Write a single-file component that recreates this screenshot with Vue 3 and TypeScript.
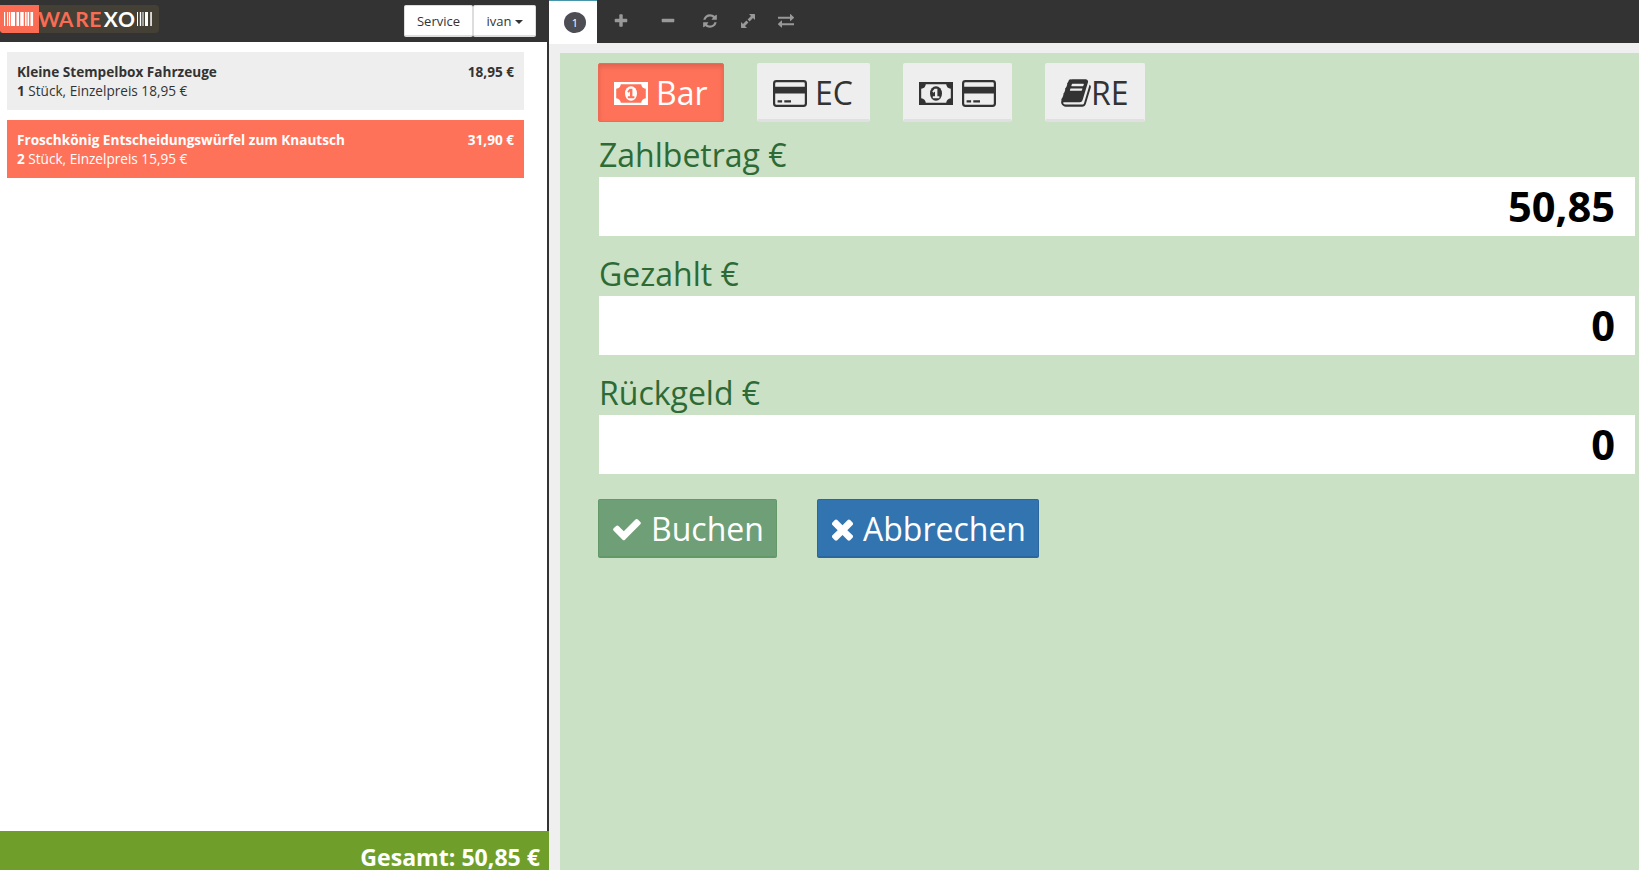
<script setup lang="ts">
import { ref } from 'vue'

interface Item {
  name: string
  qty: number
  unit: string
  total: string
}

const items: Item[] = [
  { name: 'Kleine Stempelbox Fahrzeuge', qty: 1, unit: '18,95 €', total: '18,95 €' },
  { name: 'Froschkönig Entscheidungswürfel zum Knautsch', qty: 2, unit: '15,95 €', total: '31,90 €' },
]
const selected = ref(1)

const fields = [
  { label: 'Zahlbetrag €', value: '50,85' },
  { label: 'Gezahlt €', value: '0' },
  { label: 'Rückgeld €', value: '0' },
]

const methods = [
  { id: 'bar', icons: ['money'], label: 'Bar' },
  { id: 'ec', icons: ['card'], label: 'EC' },
  { id: 'mix', icons: ['money', 'card'], label: '' },
  { id: 're', icons: ['book'], label: 'RE' },
]
const method = ref('bar')

const bars: number[][] = [
  [4, 1.2], [7, 1.2], [9, 1.2], [11, 4], [16.5, 2.5], [20.3, 3.4], [25, 1.6], [27.5, 1.6], [30.5, 2.6],
  [137, 1], [139.8, 1.4], [142.5, 1], [145, 3], [150.3, 1.5],
]

const book =
  'M1703 478q40 57 18 129l-275 906q-19 64-76.5 107.5t-122.5 43.5h-923q-77 0-148.5-53.5t-99.5-131.5q-24-67-2-127 0-4 3-27t4-37q1-8-3-21.5t-3-19.5q2-11 8-21t16.5-23.5 16.5-23.5q23-38 45-91.5t30-91.5q3-10 .5-30t-.5-28q3-11 17-28t17-23q21-36 42-92t25-90q1-9-2.5-32t.5-28q4-13 22-30.5t22-22.5q19-26 42.5-84.5t27.5-96.5q1-8-3-25.5t-2-26.5q2-8 9-18t18-23 17-21q8-12 16.5-30.5t15-35 16-36 19.5-32 26.5-23.5 36-11.5 47.5 5.5l-1 3q38-9 51-9h761q74 0 114 56t18 130l-274 906q-36 119-71.5 153.5t-128.5 34.5h-869q-27 0-38 15-11 16-1 43 24 70 144 70h923q29 0 56-15.5t35-41.5l300-987q7-22 5-57 38 15 59 43zm-1064 2q-4 13 2 22.5t20 9.5h608q13 0 25.5-9.5t16.5-22.5l21-64q4-13-2-22.5t-20-9.5h-608q-13 0-25.5 9.5t-16.5 22.5zm-83 256q-4 13 2 22.5t20 9.5h608q13 0 25.5-9.5t16.5-22.5l21-64q4-13-2-22.5t-20-9.5h-608q-13 0-25.5 9.5t-16.5 22.5z'
const check =
  'M1671 566q0 40-28 68l-724 724-136 136q-28 28-68 28t-68-28l-136-136-362-362q-28-28-28-68t28-68l136-136q28-28 68-28t68 28l294 295 656-657q28-28 68-28t68 28l136 136q28 28 28 68z'
const times =
  'M1490 1322q0 40-28 68l-136 136q-28 28-68 28t-68-28l-294-294-294 294q-28 28-68 28t-68-28l-136-136q-28-28-28-68t28-68l294-294-294-294q-28-28-28-68t28-68l136-136q28-28 68-28t68 28l294 294 294-294q28-28 68-28t68 28l136 136q28 28 28 68t-28 68l-294 294 294 294q28 28 28 68z'
const plus =
  'M1600 736v192q0 40-28 68t-68 28h-416v416q0 40-28 68t-68 28h-192q-40 0-68-28t-28-68v-416h-416q-40 0-68-28t-28-68v-192q0-40 28-68t68-28h416v-416q0-40 28-68t68-28h192q40 0 68 28t28 68v416h416q40 0 68 28t28 68z'
const minus =
  'M1600 736v192q0 40-28 68t-68 28h-1216q-40 0-68-28t-28-68v-192q0-40 28-68t68-28h1216q40 0 68 28t28 68z'
const refresh =
  'M1639 1056q0 5-1 7-64 268-268 434.5t-478 166.5q-146 0-282.5-55t-243.5-157l-129 129q-19 19-45 19t-45-19-19-45v-448q0-26 19-45t45-19h448q26 0 45 19t19 45-19 45l-137 137q71 66 161 102t187 36q134 0 250-65t186-179q11-17 53-117 8-23 30-23h192q13 0 22.5 9.5t9.5 22.5zm25-800v448q0 26-19 45t-45 19h-448q-26 0-45-19t-19-45 19-45l138-138q-148-137-349-137-134 0-250 65t-186 179q-11 17-53 117-8 23-30 23h-199q-13 0-22.5-9.5t-9.5-22.5v-7q65-268 270-434.5t480-166.5q146 0 284 55.5t245 156.5l130-129q19-19 45-19t45 19 19 45z'
</script>

<template>
  <div class="app">
    <aside class="cart">
      <header class="cart-head">
        <svg class="logo" width="159" height="28" viewBox="0 0 159 28">
          <rect x="-6" width="165" height="28" rx="4" fill="#444035" />
          <path d="M0 0h39v28H2L0 26z" fill="#f96b53" />
          <rect v-for="b in bars" :key="b[0]" :x="b[0]" y="7" :width="b[1]" height="14" fill="#fff" />
          <text class="brand" x="38 58.8 75.3 89.3" y="21.800" fill="#f96b53">WARE</text>
          <text class="brand" x="103.800 118" y="21.800" fill="#fff">XO</text>
        </svg>
        <div class="group">
          <button class="small service">Service</button>
          <button class="small user">ivan<i class="caret"></i></button>
        </div>
      </header>
      <ul class="items">
        <li
          v-for="(item, i) in items"
          :key="item.name"
          class="item"
          :class="{ active: i === selected }"
          @click="selected = i"
        >
          <div class="line"><b>{{ item.name }}</b><b>{{ item.total }}</b></div>
          <div><b>{{ item.qty }}</b> Stück, Einzelpreis {{ item.unit }}</div>
        </li>
      </ul>
      <footer class="total">Gesamt: 50,85 €</footer>
    </aside>

    <main class="main">
      <nav class="tabs">
        <div class="tab"><span class="badge">1</span></div>
        <div class="tools">
          <svg class="t-plus" width="16" height="16" viewBox="0 0 1792 1792"><path :d="plus" /></svg>
          <svg class="t-minus" width="16" height="16" viewBox="0 0 1792 1792"><path :d="minus" /></svg>
          <svg class="t-refresh" width="16" height="16" viewBox="0 0 1792 1792"><path :d="refresh" /></svg>
          <svg class="t-expand" width="16" height="16" viewBox="0 0 16 16">
            <path d="M9 1h5.3q.7 0 .7.7V7l-2-2-3.4 3.4-2-2L11 3zM7 15H1.700Q1 15 1 14.300V9l2 2 3.400-3.400 2 2L5 13z" />
          </svg>
          <svg class="t-exchange" width="18" height="16" viewBox="0 0 18 16">
            <path d="M1 3.700h12V1.400q0-.5.500-.3l3.400 3.200q.3.300 0 .600l-3.400 3.100q-.5.200-.5-.3V5.800H1zM17 10.200H5V7.900q0-.5-.5-.3L1.100 10.800q-.3.300 0 .600l3.400 3.100q.5.200.5-.3v-1.900h12z" />
          </svg>
        </div>
      </nav>
      <section class="pay">
        <div class="methods">
          <button
            v-for="m in methods"
            :key="m.id"
            class="btn"
            :class="['m-' + m.id, { on: m.id === method }]"
            @click="method = m.id"
          >
            <template v-for="ic in m.icons" :key="ic">
              <svg v-if="ic === 'money'" class="wide" viewBox="0 0 34 28">
                <path fill-rule="evenodd" d="M0 3h34v23H0zM6.800 5.200Q6.300 9.200 2.200 9.700v9.600q4.100.5 4.600 4.500h20.400q.5-4 4.600-4.500V9.700q-4.100-.5-4.600-4.500z" />
                <ellipse cx="17" cy="14.500" rx="6" ry="7.300" />
                <path class="cut" d="M15.600 9.700h2.800v7.600h2v2h-6.600v-2h2.200v-4.700l-1.500 1.200-1.200-1.400z" />
              </svg>
              <svg v-else-if="ic === 'card'" class="wide" viewBox="0 0 34 28">
                <path fill-rule="evenodd" d="M3.400 1h27.200Q34 1 34 4.400v20.200q0 3.400-3.400 3.400H3.400Q0 28 0 24.600V4.400Q0 1 3.400 1zm0 2.200q-1.200 0-1.200 1.200v3.400h29.600V4.400q0-1.200-1.200-1.200zM2.200 14.500v10.100q0 1.200 1.200 1.200h27.200q1.200 0 1.200-1.200V14.500zM4.600 21.300h4.500v2.200H4.600zM11.300 21.300H18v2.200h-6.700z" />
              </svg>
              <svg v-else class="book" viewBox="0 0 1664 1792"><path transform="translate(-64)" :d="book" /></svg>
            </template>
            <span v-if="m.label" class="txt">{{ m.label }}</span>
          </button>
        </div>

        <label v-for="f in fields" :key="f.label" class="field">
          <span class="label">{{ f.label }}</span>
          <span class="value">{{ f.value }}</span>
        </label>

        <div class="actions">
          <button class="btn book-it">
            <svg width="32" height="32" viewBox="0 0 1792 1792"><path :d="check" /></svg><span>Buchen</span>
          </button>
          <button class="btn cancel">
            <svg width="25" height="32" viewBox="192 0 1408 1792"><path :d="times" /></svg><span>Abbrechen</span>
          </button>
        </div>
      </section>
    </main>
  </div>
</template>

<style>
html,
body {
  overflow: hidden;
}
</style>

<style scoped>
* {
  box-sizing: border-box;
}
.app {
  display: flex;
  width: 100vw;
  height: 100vh;
  overflow: hidden;
  font-family: 'Open Sans', 'Noto Sans', sans-serif;
  font-size: 14px;
  color: #333;
  background: #eeefee;
}
button {
  font: inherit;
  cursor: pointer;
}
.cart {
  display: flex;
  flex-direction: column;
  flex: none;
  width: 549px;
  background: #fff;
}
.cart-head {
  display: flex;
  justify-content: space-between;
  height: 42px;
  flex: none;
  padding: 5px 13px 0 0;
  background: #333;
}
.logo {
  display: block;
}
.brand {
  font-family: Lato, sans-serif;
  font-weight: 700;
  font-size: 21px;
}
.group {
  display: flex;
}
.small {
  height: 32px;
  padding: 0;
  border: 1px solid #ddd;
  border-bottom: 2px solid #ddd;
  border-radius: 2px;
  background: #fff;
  color: #333;
  font-size: 13px;
}
.service {
  width: 69px;
}
.user {
  width: 63px;
  padding-left: 1px;
}
.caret {
  display: inline-block;
  margin-left: 4px;
  vertical-align: 2px;
  border: 4px solid transparent;
  border-top-color: #333;
  border-bottom: 0;
}
.items {
  flex: 1;
  margin: 0;
  padding: 10px 23px 0 7px;
  list-style: none;
  border-right: 2px solid #333;
}
.item {
  height: 58px;
  margin-bottom: 10px;
  padding: 10px;
  line-height: 19px;
  font-size: 13.6px;
  background: #eee;
}
.item.active {
  background: #ff725a;
  color: #fff;
}
.line {
  display: flex;
  justify-content: space-between;
}
.total {
  flex: none;
  height: 39px;
  padding: 13px 9px 0 0;
  background: #6f9f2a;
  color: #fff;
  font-size: 23.1px;
  line-height: 26px;
  font-weight: 700;
  text-align: right;
}
.main {
  display: flex;
  flex-direction: column;
  flex: 1;
  min-width: 0;
}
.tabs {
  display: flex;
  height: 53px;
  flex: none;
}
.tab {
  width: 48px;
  height: 44px;
  padding: 11px 0 0 15px;
  border-top: 1px solid #4796ab;
  background: #fff;
}
.badge {
  display: block;
  width: 22px;
  height: 21px;
  border-radius: 50%;
  background: #4d4d54;
  color: #fff;
  font-size: 11px;
  line-height: 21px;
  text-align: center;
}
.tools {
  display: flex;
  flex: 1;
  height: 43px;
  padding: 13px 0 0 16px;
  background: #333;
  fill: #999;
}
.t-minus {
  margin-left: 31px;
}
.t-refresh {
  margin-left: 26px;
}
.t-expand {
  margin-left: 22px;
}
.t-exchange {
  margin-left: 21px;
}
.pay {
  flex: 1;
  margin-left: 11px;
  padding: 10px 4px 0 39px;
  background: #cae1c5;
}
.methods,
.actions {
  display: flex;
  margin-left: -1px;
}
.methods {
  gap: 33px;
  height: 59px;
}
.btn {
  display: flex;
  align-items: center;
  height: 59px;
  padding: 2px 15px 0;
  border: 1px solid #eee;
  border-bottom: 3px solid #e0dfe1;
  border-radius: 2px;
  background: #eee;
  color: #333;
  fill: currentColor;
  font-size: 32px;
  line-height: 44px;
  white-space: nowrap;
}
.btn svg {
  flex: none;
}
.btn.on {
  padding-bottom: 2px;
  border: 1px solid #ed6a54;
  background: #ff725a;
  box-shadow: inset 0 3px 5px rgba(0, 0, 0, 0.13);
  color: #fff;
}
.wide {
  width: 34px;
  height: 28px;
}
.cut {
  fill: #eee;
}
.on .cut {
  fill: #ff725a;
}
.wide + .wide {
  margin-left: 9px;
}
.wide + .txt {
  margin-left: 8px;
}
.book {
  width: 30px;
  height: 32px;
}
.m-bar {
  width: 126px;
}
.m-ec {
  width: 113px;
}
.m-mix {
  width: 109px;
}
.m-re {
  width: 100px;
}
.field {
  display: block;
  height: 119px;
}
.methods + .field {
  margin-top: -5px;
}
.label {
  display: block;
  height: 60px;
  padding-top: 16px;
  color: #2d6a35;
  font-size: 32px;
  line-height: 44px;
}
.value {
  display: block;
  height: 59px;
  padding-right: 20px;
  background: #fff;
  color: #000;
  font-size: 41.6px;
  line-height: 59px;
  font-weight: 700;
  text-align: right;
}
.actions {
  gap: 40px;
  margin-top: 25px;
}
.book-it,
.cancel {
  padding: 2px 0 0 12px;
  color: #fff;
  border-width: 1px 1px 2px;
}
.book-it {
  width: 179px;
  background: #6f9f76;
  border-color: #639869;
}
.book-it span {
  margin-left: 8px;
}
.cancel {
  width: 222px;
  background: #3174b0;
  border-color: #2b679e;
}
.cancel span {
  margin-left: 8px;
}
</style>
